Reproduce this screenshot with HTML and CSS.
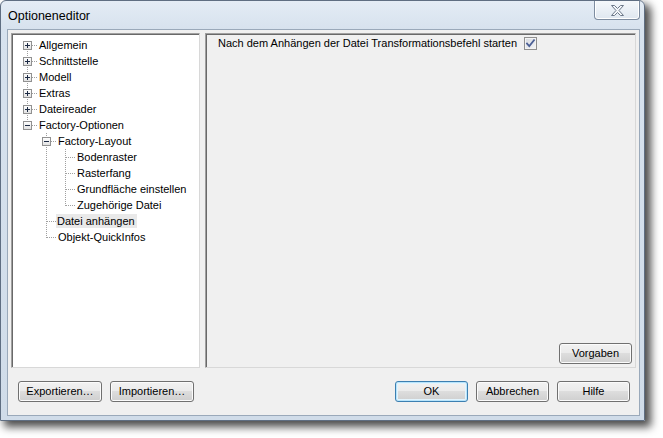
FILE: index.html
```html
<!DOCTYPE html>
<html lang="de">
<head>
<meta charset="utf-8">
<title>Optioneneditor</title>
<link rel="stylesheet" href="styles.css">
</head>
<body>
<div class="window">
  <div class="titlebar">
    <span class="title">Optioneneditor</span>
    <button class="close" aria-label="Schließen">
      <svg width="13" height="11" viewBox="0 0 13 11"><polygon points="0.5,0.5 3.5,0.5 6.5,3.5 9.5,0.5 12.5,0.5 8,5.5 12.5,10.5 9.5,10.5 6.5,7.5 3.5,10.5 0.5,10.5 5,5.5" fill="#f4f6f9" stroke="#6c7889" stroke-width="1" stroke-linejoin="round"/></svg>
    </button>
  </div>
  <div class="client">
    <div class="panels">
      <div class="tree">
        <div class="row"><span class="g first"><span class="box plus"></span></span><span class="label">Allgemein</span></div>
        <div class="row"><span class="g tee"><span class="box plus"></span></span><span class="label">Schnittstelle</span></div>
        <div class="row"><span class="g tee"><span class="box plus"></span></span><span class="label">Modell</span></div>
        <div class="row"><span class="g tee"><span class="box plus"></span></span><span class="label">Extras</span></div>
        <div class="row"><span class="g tee"><span class="box plus"></span></span><span class="label">Dateireader</span></div>
        <div class="row"><span class="g ell"><span class="box"></span></span><span class="label">Factory-Optionen</span></div>
        <div class="row"><span class="g"></span><span class="g tee"><span class="box"></span></span><span class="label">Factory-Layout</span></div>
        <div class="row"><span class="g"></span><span class="g vert"></span><span class="g tee"></span><span class="label">Bodenraster</span></div>
        <div class="row"><span class="g"></span><span class="g vert"></span><span class="g tee"></span><span class="label">Rasterfang</span></div>
        <div class="row"><span class="g"></span><span class="g vert"></span><span class="g tee"></span><span class="label">Grundfläche einstellen</span></div>
        <div class="row"><span class="g"></span><span class="g vert"></span><span class="g ell"></span><span class="label">Zugehörige Datei</span></div>
        <div class="row"><span class="g"></span><span class="g tee"></span><span class="label selected">Datei anhängen</span></div>
        <div class="row"><span class="g"></span><span class="g ell"></span><span class="label">Objekt-QuickInfos</span></div>
      </div>
      <div class="page">
        <div class="opt">
          <span class="opt-label">Nach dem Anhängen der Datei Transformationsbefehl starten</span>
          <span class="check"><svg width="11" height="11" viewBox="0 0 11 11"><path d="M2 5.5 L4.3 8 L9 2.2" fill="none" stroke="#4b5f95" stroke-width="1.8" stroke-linecap="square"/></svg></span>
        </div>
        <div class="page-foot"><button class="btn">Vorgaben</button></div>
      </div>
    </div>
    <div class="footer">
      <div class="group">
        <button class="btn wide">Exportieren…</button>
        <button class="btn wide">Importieren…</button>
      </div>
      <div class="group">
        <button class="btn default">OK</button>
        <button class="btn">Abbrechen</button>
        <button class="btn">Hilfe</button>
      </div>
    </div>
  </div>
</div>
</body>
</html>
```

FILE: styles.css
```css
html, body {
  margin: 0;
  background: #ffffff;
}

body {
  min-height: 438px;
  font: 11px "Liberation Sans", Arial, sans-serif;
  color: #000;
}

.window {
  width: 645px;
  height: 421px;
  box-sizing: border-box;
  border: 1px solid #5f6e82;
  border-radius: 6px 6px 0 0;
  background: linear-gradient(#e4ecf5, #d7e2ee 28px, #d0dce9);
  box-shadow: 5px 5px 9px 1px rgba(0, 0, 0, 0.7);
  display: flex;
  flex-direction: column;
  padding: 0 4px 4px 6px;
}

.titlebar {
  height: 28px;
  display: flex;
  align-items: flex-start;
  justify-content: space-between;
}

.title {
  font-size: 12.5px;
  line-height: 28px;
  padding-left: 1px;
  margin-top: 1px;
}

.close {
  width: 46px;
  height: 19px;
  box-sizing: border-box;
  border: 1px solid #7d8ca0;
  border-top: none;
  border-radius: 0 0 4px 4px;
  background: linear-gradient(#f5f8fb, #dfe7f0);
  box-shadow: inset 0 -1px 0 #fff, inset 1px 0 0 #fff, inset -1px 0 0 #fff;
  padding: 0;
  display: flex;
  align-items: center;
  justify-content: center;
}

.close svg {
  display: block;
}

.client {
  flex: 1;
  background: #f0f0f0;
  border: 1px solid #9aa9ba;
  display: flex;
  flex-direction: column;
  padding: 3px 3px 0 3px;
}

.panels {
  display: flex;
  gap: 5px;
  height: 335px;
}

.tree {
  width: 189px;
  box-sizing: border-box;
  background: #fff;
  border: 1px solid;
  border-color: #a0a0a0 #d8d8d8 #d8d8d8 #a0a0a0;
  box-shadow: inset 1px 1px 0 #696969;
  padding: 3px 0 0 6px;
}

.row {
  display: flex;
  height: 16px;
}

.g {
  width: 19px;
  height: 16px;
  flex: none;
  display: flex;
  align-items: flex-start;
  background-repeat: no-repeat;
}

.tee {
  background-image:
    repeating-linear-gradient(to bottom, #a0a0a0 0 1px, transparent 1px 2px),
    repeating-linear-gradient(to right, #a0a0a0 0 1px, transparent 1px 2px);
  background-size: 1px 16px, 9px 1px;
  background-position: 9px 0, 10px 8px;
}

.vert {
  background-image:
    repeating-linear-gradient(to bottom, #a0a0a0 0 1px, transparent 1px 2px);
  background-size: 1px 16px;
  background-position: 9px 0;
}

.ell {
  background-image:
    repeating-linear-gradient(to bottom, #a0a0a0 0 1px, transparent 1px 2px),
    repeating-linear-gradient(to right, #a0a0a0 0 1px, transparent 1px 2px);
  background-size: 1px 9px, 9px 1px;
  background-position: 9px 0, 10px 8px;
}

.first {
  background-image:
    repeating-linear-gradient(to bottom, #a0a0a0 0 1px, transparent 1px 2px),
    repeating-linear-gradient(to right, #a0a0a0 0 1px, transparent 1px 2px);
  background-size: 1px 8px, 9px 1px;
  background-position: 9px 8px, 10px 8px;
}

.box {
  width: 9px;
  height: 9px;
  box-sizing: border-box;
  margin: 4px 0 0 5px;
  border: 1px solid #919191;
  background:
    linear-gradient(#1c2a44, #1c2a44) 1px 3px / 5px 1px no-repeat,
    linear-gradient(#fdfdfd, #e2e2e2);
}

.box.plus {
  background:
    linear-gradient(#1c2a44, #1c2a44) 1px 3px / 5px 1px no-repeat,
    linear-gradient(#1c2a44, #1c2a44) 3px 1px / 1px 5px no-repeat,
    linear-gradient(#fdfdfd, #e2e2e2);
}

.label {
  line-height: 16px;
  padding: 0 2px 0 2px;
  white-space: nowrap;
}

.label.selected {
  line-height: 14px;
  height: 14px;
  margin-top: 1px;
  padding: 0 2px 0 1px;
  background: #e9e9e9;
}

.page {
  flex: 1;
  box-sizing: border-box;
  border: 1px solid;
  border-color: #a0a0a0 #d8d8d8 #d8d8d8 #a0a0a0;
  box-shadow: inset 1px 1px 0 #696969;
  display: flex;
  flex-direction: column;
  justify-content: space-between;
  padding: 3px 3px 3px 12px;
}

.opt {
  display: flex;
  align-items: center;
  height: 13px;
}

.opt-label {
  width: 306px;
  flex: none;
  white-space: nowrap;
  line-height: 13px;
}

.check {
  width: 13px;
  height: 13px;
  box-sizing: border-box;
  border: 1px solid #8f8f8f;
  background: linear-gradient(135deg, #d6d9df, #f4f5f7);
  box-shadow: inset 0 0 0 1px #f3f3f3;
  display: flex;
  align-items: center;
  justify-content: center;
}

.check svg {
  display: block;
}

.page-foot {
  display: flex;
  justify-content: flex-end;
}

.btn {
  width: 73px;
  height: 21px;
  box-sizing: border-box;
  border: 1px solid #707070;
  border-radius: 3px;
  background: linear-gradient(#f2f2f2 0%, #ebebeb 45%, #dddddd 50%, #cfcfcf 100%);
  box-shadow: inset 0 0 0 1px #fbfbfb;
  font: 11px "Liberation Sans", Arial, sans-serif;
  color: #000;
  padding: 0;
  line-height: 19px;
}

.btn.wide {
  width: 84px;
}

.btn.default {
  border-color: #3c7fb1;
  box-shadow: inset 0 0 0 1px #b8e4fb, inset 0 0 0 2px #e3f4fd;
}

.footer {
  display: flex;
  justify-content: space-between;
  margin-top: 13px;
  padding: 0 6px 0 7px;
}

.group {
  display: flex;
  gap: 8px;
}
```
